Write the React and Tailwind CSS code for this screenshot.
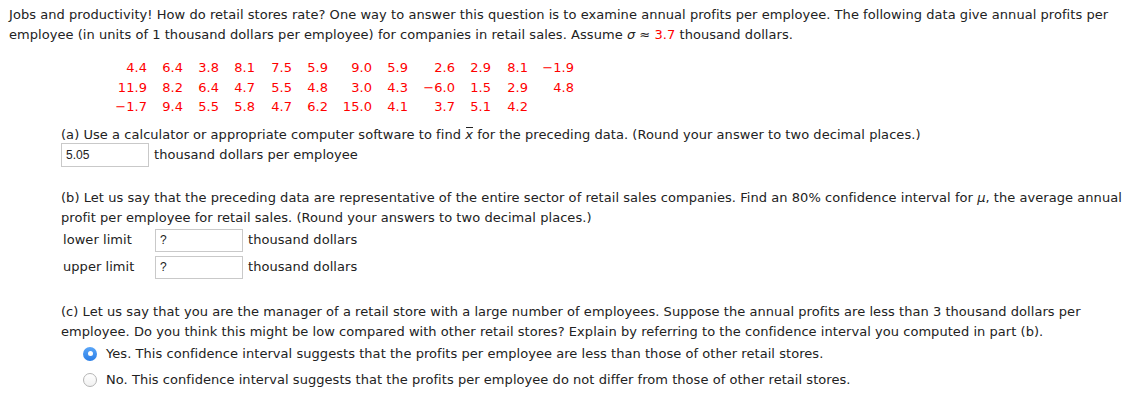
import React from "react";

const rows = [
  ["4.4", "6.4", "3.8", "8.1", "7.5", "5.9", "9.0", "5.9", "2.6", "2.9", "8.1", "−1.9"],
  ["11.9", "8.2", "6.4", "4.7", "5.5", "4.8", "3.0", "4.3", "−6.0", "1.5", "2.9", "4.8"],
  ["−1.7", "9.4", "5.5", "5.8", "4.7", "6.2", "15.0", "4.1", "3.7", "5.1", "4.2", ""],
];

function Input({ value }) {
  return (
    <div className="flex h-full w-[88px] items-center border border-[#c9c9c9] bg-white pl-[4px] font-['Liberation_Sans',Arial,sans-serif] text-[12px] tracking-normal text-[#222]">
      {value}
    </div>
  );
}

export default function App() {
  return (
    <div className="min-h-[403px] w-[1131px] bg-white pl-[9px] pt-[5px] font-['DejaVu_Sans',Verdana,sans-serif] text-[13px] leading-[20px] tracking-[0.05px] text-[#222]">
      <div className="whitespace-nowrap">
        <div>
          Jobs and productivity! How do retail stores rate? One way to answer this question is to examine annual profits per employee. The following data give annual profits per
        </div>
        <div>
          employee (in units of 1 thousand dollars per employee) for companies in retail sales. Assume{" "}
          <i>σ</i> ≈ <span className="text-[#ff0000]">3.7</span> thousand dollars.
        </div>
      </div>

      <div className="mt-[13px] ml-[106px] grid grid-cols-[32px_36px_36px_36px_37px_36px_44px_36px_47px_36px_37px_46px] text-[#ff0000]">
        {rows.flat().map((v, i) => (
          <div key={i} className="h-[19.5px] text-right leading-[19.5px]">
            {v}
          </div>
        ))}
      </div>

      <div className="ml-[52px]">
        <div className="mt-[8px] h-[20px] whitespace-nowrap">
          (a) Use a calculator or appropriate computer software to find{" "}
          <span className="relative inline-block italic">
            x
            <span className="absolute left-[1px] right-[0px] top-[2px] h-[1px] bg-[#222]" />
          </span>{" "}
          for the preceding data. (Round your answer to two decimal places.)
        </div>
        <div className="mt-[-2px] flex h-[24px] items-center gap-[5px]">
          <Input value="5.05" />
          <span>thousand dollars per employee</span>
        </div>

        <div className="mt-[21px] whitespace-nowrap">
          <div>
            (b) Let us say that the preceding data are representative of the entire sector of retail sales companies. Find an 80% confidence interval for{" "}
            <i>μ</i>, the average annual
          </div>
          <div>profit per employee for retail sales. (Round your answers to two decimal places.)</div>
        </div>
        <div className="mt-[1px] flex h-[23px] items-center">
          <span className="w-[94px] pl-[2px]">lower limit</span>
          <Input value="?" />
          <span className="ml-[5px]">thousand dollars</span>
        </div>
        <div className="mt-[4px] flex h-[23px] items-center">
          <span className="w-[94px] pl-[2px]">upper limit</span>
          <Input value="?" />
          <span className="ml-[5px]">thousand dollars</span>
        </div>

        <div className="mt-[23px] whitespace-nowrap">
          <div>
            (c) Let us say that you are the manager of a retail store with a large number of employees. Suppose the annual profits are less than 3 thousand dollars per
          </div>
          <div>
            employee. Do you think this might be low compared with other retail stores? Explain by referring to the confidence interval you computed in part (b).
          </div>
        </div>
        <div className="mt-[2px] flex h-[20px] items-center whitespace-nowrap pl-[22px]">
          <span className="flex h-[14px] w-[14px] items-center justify-center rounded-full bg-gradient-to-b from-[#5aa6f8] to-[#2a7ee6]">
            <span className="h-[5px] w-[5px] rounded-full bg-white" />
          </span>
          <span className="ml-[9px]">
            Yes. This confidence interval suggests that the profits per employee are less than those of other retail stores.
          </span>
        </div>
        <div className="mt-[6px] flex h-[20px] items-center whitespace-nowrap pl-[22px]">
          <span className="h-[14px] w-[14px] rounded-full border border-[#b5b5b5] bg-gradient-to-b from-white to-[#f1f1f1]" />
          <span className="ml-[9px]">
            No. This confidence interval suggests that the profits per employee do not differ from those of other retail stores.
          </span>
        </div>
      </div>
    </div>
  );
}
